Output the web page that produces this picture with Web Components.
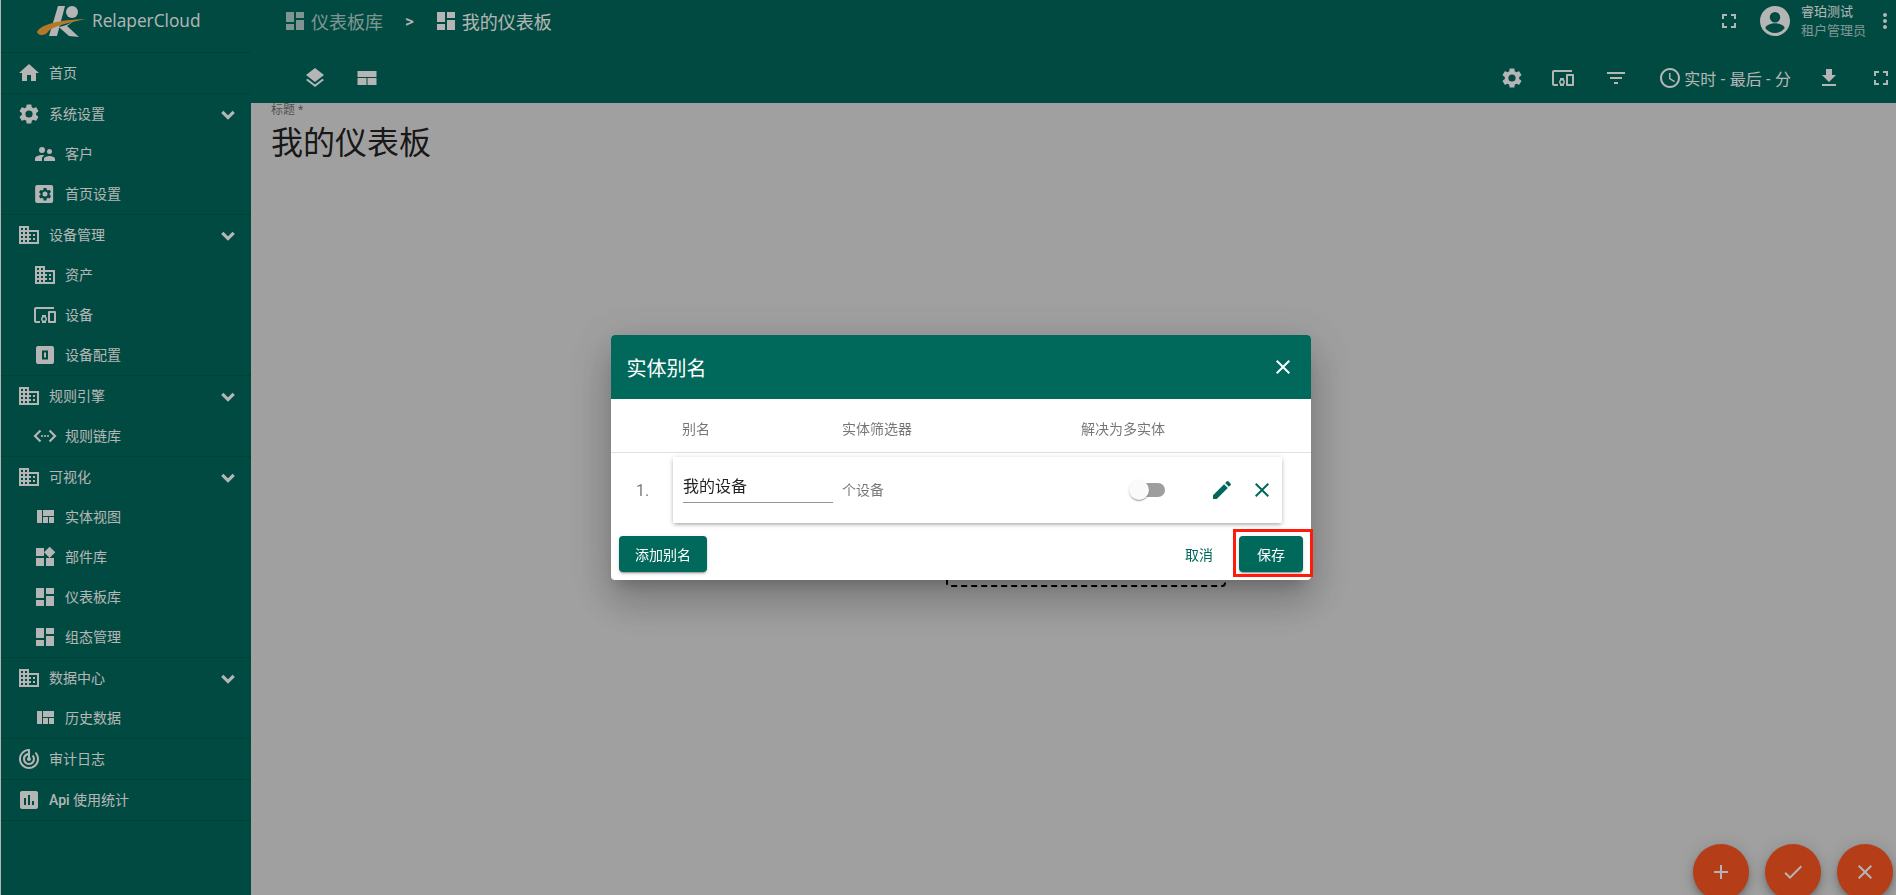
<!DOCTYPE html>
<html lang="zh">
<head>
<meta charset="utf-8">
<title>我的仪表板</title>
<style>
  html, body { margin: 0; height: 100%; overflow: hidden; }
  body { font-family: Roboto, "Noto Sans CJK SC", sans-serif; background: #e2e2e2; }
</style>
</head>
<body>
<app-shell>
  <side-nav slot="side"></side-nav>
  <top-bar slot="top"></top-bar>
  <dash-body slot="main"></dash-body>
  <fab-group slot="main"></fab-group>
</app-shell>
<alias-dialog></alias-dialog>

<script>
const ICONS = {
  home: '<path d="M10 20v-6h4v6h5v-8h3L12 3 2 12h3v8z"/>',
  gear: '<path d="M19.14 12.94c.04-.3.06-.61.06-.94s-.02-.64-.07-.94l2.03-1.58a.49.49 0 0 0 .12-.61l-1.92-3.32a.49.49 0 0 0-.59-.22l-2.39.96a7 7 0 0 0-1.62-.94l-.36-2.54a.48.48 0 0 0-.48-.41h-3.84a.47.47 0 0 0-.47.41l-.36 2.54c-.59.24-1.13.57-1.62.94l-2.39-.96a.48.48 0 0 0-.59.22L2.74 8.87a.47.47 0 0 0 .12.61l2.03 1.58c-.05.3-.09.63-.09.94s.02.64.07.94l-2.03 1.58a.49.49 0 0 0-.12.61l1.92 3.32c.12.22.37.29.59.22l2.39-.96c.5.38 1.03.7 1.62.94l.36 2.54c.05.24.24.41.48.41h3.84c.24 0 .44-.17.47-.41l.36-2.54a7 7 0 0 0 1.62-.94l2.39.96c.22.08.47 0 .59-.22l1.92-3.32a.47.47 0 0 0-.12-.61l-2.01-1.58zM12 15.6A3.6 3.6 0 1 1 12 8.4a3.6 3.6 0 0 1 0 7.2z"/>',
  people: '<path d="M16.5 12a2.5 2.5 0 1 0 0-5 2.5 2.5 0 0 0 0 5zM9 11a3 3 0 1 0 0-6 3 3 0 0 0 0 6zm7.5 3c-1.83 0-5.5.92-5.5 2.75V19h11v-2.25c0-1.83-3.67-2.75-5.5-2.75zM9 13c-2.33 0-7 1.17-7 3.5V19h7v-2.25c0-.85.33-2.34 2.37-3.47C10.5 13.1 9.66 13 9 13z"/>',
  homeset: '<path fill-rule="evenodd" d="M5 3h14a2 2 0 0 1 2 2v14a2 2 0 0 1-2 2H5a2 2 0 0 1-2-2V5a2 2 0 0 1 2-2zm12.4 9.700c.03-.23.05-.46.05-.7s-.02-.47-.05-.7l1.5-1.180-1.400-2.440-1.770.72a5 5 0 0 0-1.200-.7L14.250 6h-2.800l-.27 1.900c-.43.17-.84.4-1.200.7l-1.770-.72-1.400 2.440 1.500 1.180a5 5 0 0 0 0 1.400l-1.500 1.180 1.400 2.440 1.770-.72c.36.3.77.53 1.200.7l.27 1.900h2.800l.27-1.900c.43-.17.84-.4 1.200-.7l1.770.72 1.400-2.440zM12.850 14.500a2.500 2.500 0 1 1 0-5 2.500 2.500 0 0 1 0 5z" transform="translate(-.85 0)"/>',
  domain: '<path d="M12 7V3H2v18h20V7H12zM6 19H4v-2h2v2zm0-4H4v-2h2v2zm0-4H4V9h2v2zm0-4H4V5h2v2zm4 12H8v-2h2v2zm0-4H8v-2h2v2zm0-4H8V9h2v2zm0-4H8V5h2v2zm10 12h-8v-2h2v-2h-2v-2h2v-2h-2V9h8v10zm-2-8h-2v2h2v-2zm0 4h-2v2h2v-2z"/>',
  devices: '<path d="M3 6h18V4H3c-1.100 0-2 .9-2 2v12c0 1.100.9 2 2 2h4v-2H3V6zm10 6H9v1.780c-.61.55-1 1.330-1 2.220s.39 1.670 1 2.220V20h4v-1.780c.61-.55 1-1.340 1-2.220s-.39-1.670-1-2.220V12zm-2 5.500c-.83 0-1.500-.67-1.500-1.500s.67-1.500 1.500-1.500 1.500.67 1.500 1.500-.67 1.500-1.500 1.500zM22 8h-6c-.5 0-1 .5-1 1v10c0 .5.5 1 1 1h6c.5 0 1-.5 1-1V9c0-.5-.5-1-1-1zm-1 10h-4v-8h4v8z"/>',
  profile: '<path fill-rule="evenodd" d="M5 3h14a2 2 0 0 1 2 2v14a2 2 0 0 1-2 2H5a2 2 0 0 1-2-2V5a2 2 0 0 1 2-2zm4 4.500v9h6v-9H9zm2 2h2v5h-2v-5z"/>',
  chain: '<path d="M7.500 6.500 2 12l5.500 5.500M16.500 6.500 22 12l-5.500 5.500" fill="none" stroke="currentColor" stroke-width="2.200"/><circle cx="9" cy="12" r="1.100"/><circle cx="12" cy="12" r="1.100"/><circle cx="15" cy="12" r="1.100"/>',
  view: '<path d="M10 18h5v-6h-5v6zm-6 0h5V5H4v13zm12 0h5v-6h-5v6zM10 5v6h11V5H10z"/>',
  widgets: '<path d="M13 13v8h8v-8h-8zM3 21h8v-8H3v8zM3 3v8h8V3H3zm13.660-1.310L11 7.340 16.660 13l5.660-5.660-5.660-5.650z"/>',
  dashboard: '<path d="M3 13h8V3H3v10zm0 8h8v-6H3v6zm10 0h8V11h-8v10zm0-18v6h8V3h-8z"/>',
  audit: '<path d="M19.070 4.930l-1.410 1.410C19.100 7.790 20 9.790 20 12c0 4.420-3.580 8-8 8s-8-3.580-8-8c0-4.080 3.050-7.440 7-7.930v2.020C8.160 6.570 6 9.030 6 12c0 3.310 2.690 6 6 6s6-2.690 6-6c0-1.660-.67-3.160-1.760-4.240l-1.410 1.410C15.550 9.900 16 10.900 16 12c0 2.210-1.790 4-4 4s-4-1.790-4-4c0-1.860 1.280-3.410 3-3.860v2.140c-.6.35-1 .98-1 1.720 0 1.100.9 2 2 2s2-.9 2-2c0-.74-.4-1.380-1-1.720V2h-1C6.480 2 2 6.480 2 12s4.480 10 10 10 10-4.480 10-10c0-2.760-1.120-5.260-2.930-7.070z"/>',
  chart: '<path d="M19 3H5c-1.100 0-2 .9-2 2v14c0 1.100.9 2 2 2h14c1.100 0 2-.9 2-2V5c0-1.100-.9-2-2-2zM9 17H7v-7h2v7zm4 0h-2V7h2v10zm4 0h-2v-4h2v4z"/>',
  chevron: '<path d="M7.410 9.590 12 14.170l4.590-4.580L18 11l-6 6-6-6z" stroke="currentColor" stroke-width="1.200"/>',
  layers: '<path d="m11.990 18.540-7.370-5.730L3 14.070l9 7 9-7-1.630-1.270zM12 16l7.360-5.730L21 9l-9-7-9 7 1.630 1.270z"/>',
  table: '<path d="M2.500 5h19v6h-19zM2.500 12h9v7h-9zM12.500 12h9v7h-9z"/>',
  full: '<path d="M7 14H5v5h5v-2H7v-3zm-2-4h2V7h3V5H5v5zm12 7h-3v2h5v-5h-2v3zM14 5v2h3v3h2V5h-5z"/>',
  account: '<path d="M12 2C6.480 2 2 6.480 2 12s4.480 10 10 10 10-4.480 10-10S17.520 2 12 2zm0 4a3.500 3.500 0 1 1 0 7 3.500 3.500 0 0 1 0-7zm0 14a8 8 0 0 1-6.400-3.200c.03-2.100 4.270-3.300 6.400-3.300s6.370 1.200 6.400 3.300A8 8 0 0 1 12 20z"/>',
  more: '<path d="M12 8a2 2 0 1 0 0-4 2 2 0 0 0 0 4zm0 2a2 2 0 1 0 0 4 2 2 0 0 0 0-4zm0 6a2 2 0 1 0 0 4 2 2 0 0 0 0-4z"/>',
  filter: '<path d="M10 18h4v-2h-4v2zM3 6v2h18V6H3zm3 7h12v-2H6v2z"/>',
  clock: '<path d="M11.990 2C6.470 2 2 6.480 2 12s4.470 10 9.990 10C17.520 22 22 17.520 22 12S17.520 2 11.990 2zM12 20a8 8 0 1 1 0-16 8 8 0 0 1 0 16z"/><path d="M12.500 7H11v6l5.250 3.150.75-1.230-4.500-2.670z"/>',
  download: '<path d="M19 9h-4V3H9v6H5l7 7 7-7zM5 18v2h14v-2H5z"/>',
  close: '<path d="M19 6.410 17.590 5 12 10.590 6.410 5 5 6.410 10.590 12 5 17.590 6.410 19 12 13.410 17.590 19 19 17.590 13.410 12z"/>',
  edit: '<path d="M3 17.250V21h3.750L17.810 9.940l-3.750-3.750L3 17.250zM20.710 7.040a1 1 0 0 0 0-1.410l-2.340-2.340a1 1 0 0 0-1.410 0l-1.830 1.830 3.750 3.750 1.830-1.830z"/>',
  add: '<path d="M19 13h-6v6h-2v-6H5v-2h6V5h2v6h6v2z"/>',
  check: '<path d="M9 16.170 4.830 12l-1.420 1.410L9 19 21 7l-1.410-1.410z"/>'
};

class IconGlyph extends HTMLElement {
  constructor() {
    super();
    this.attachShadow({ mode: 'open' });
    const size = this.getAttribute('size') || 24;
    this.shadowRoot.innerHTML = `
      <style>
        :host { display: inline-flex; flex: none; width: ${size}px; height: ${size}px; }
        svg { width: 100%; height: 100%; fill: currentColor; display: block; }
      </style>
      <svg viewBox="0 0 24 24">${ICONS[this.getAttribute('name')] || ''}</svg>`;
  }
}
customElements.define('icon-glyph', IconGlyph);

class AppShell extends HTMLElement {
  constructor() {
    super();
    this.attachShadow({ mode: 'open' });
    this.shadowRoot.innerHTML = `
      <style>
        :host { display: grid; grid-template-columns: 251px 1fr; height: 895px; width: 1896px; }
        .right { display: flex; flex-direction: column; min-width: 0; position: relative; }
      </style>
      <slot name="side"></slot>
      <div class="right">
        <slot name="top"></slot>
        <slot name="main"></slot>
      </div>`;
  }
}
customElements.define('app-shell', AppShell);

class NavItem extends HTMLElement {
  constructor() {
    super();
    this.attachShadow({ mode: 'open' });
    const sub = this.hasAttribute('sub');
    this.shadowRoot.innerHTML = `
      <style>
        :host { display: flex; align-items: center; height: 40px; padding-left: ${sub ? 32 : 16}px; padding-right: 11px; color: #fff; font-size: 14px; }
        .ic { width: 24px; height: 24px; display: flex; align-items: center; justify-content: center; margin-right: 8px; color: #fff; }
        .label { flex: 1; white-space: nowrap; position: relative; top: -1px; }
      </style>
      <span class="ic"><icon-glyph name="${this.getAttribute('icon')}"></icon-glyph></span>
      <span class="label"><slot></slot></span>
      ${this.hasAttribute('group') ? '<icon-glyph name="chevron"></icon-glyph>' : ''}`;
  }
}
customElements.define('nav-item', NavItem);

class NavSection extends HTMLElement {
  constructor() {
    super();
    this.attachShadow({ mode: 'open' });
    this.shadowRoot.innerHTML = `
      <style>
        :host { display: block; border-bottom: 1px solid rgba(0,0,0,.12); }
      </style>
      <slot></slot>`;
  }
}
customElements.define('nav-section', NavSection);

class SideNav extends HTMLElement {
  constructor() {
    super();
    this.attachShadow({ mode: 'open' });
    this.shadowRoot.innerHTML = `
      <style>
        :host { display: flex; flex-direction: column; background: #00695c; border-left: 1px solid #fff; box-sizing: border-box; height: 895px; overflow: hidden; }
        .logo { height: 53px; flex: none; box-sizing: border-box; display: flex; align-items: flex-start; padding: 5px 0 0 36px; border-bottom: 1px solid rgba(0,0,0,.12); color: #fff; }
        .logo svg { width: 50px; height: 33px; flex: none; }
        .logo span { font-family: "Open Sans", Roboto, sans-serif; font-size: 17.3px; line-height: 24px; margin: 4px 0 0 5px; }
      </style>
      <div class="logo">
        <svg viewBox="0 0 50 33">
          <path d="M21 1h7l-8 30h-8z" fill="#fff"/>
          <circle cx="35" cy="7" r="6" fill="#fff"/>
          <path d="M22 22c6-1 10-3 15-6l-7 5 12 11-10-1-8-7z" fill="#fff"/>
          <path d="M0 27C4 19 22 15 49 14 30 18 14 22 11 27 8 31 1 31 0 27z" fill="#ffaa3a"/>
        </svg>
        <span>RelaperCloud</span>
      </div>
      <nav-section><nav-item icon="home">首页</nav-item></nav-section>
      <nav-section>
        <nav-item icon="gear" group>系统设置</nav-item>
        <nav-item sub icon="people">客户</nav-item>
        <nav-item sub icon="homeset">首页设置</nav-item>
      </nav-section>
      <nav-section>
        <nav-item icon="domain" group>设备管理</nav-item>
        <nav-item sub icon="domain">资产</nav-item>
        <nav-item sub icon="devices">设备</nav-item>
        <nav-item sub icon="profile">设备配置</nav-item>
      </nav-section>
      <nav-section>
        <nav-item icon="domain" group>规则引擎</nav-item>
        <nav-item sub icon="chain">规则链库</nav-item>
      </nav-section>
      <nav-section>
        <nav-item icon="domain" group>可视化</nav-item>
        <nav-item sub icon="view">实体视图</nav-item>
        <nav-item sub icon="widgets">部件库</nav-item>
        <nav-item sub icon="dashboard">仪表板库</nav-item>
        <nav-item sub icon="dashboard">组态管理</nav-item>
      </nav-section>
      <nav-section>
        <nav-item icon="domain" group>数据中心</nav-item>
        <nav-item sub icon="view">历史数据</nav-item>
      </nav-section>
      <nav-section><nav-item icon="audit">审计日志</nav-item></nav-section>
      <nav-section><nav-item icon="chart"><span style="font-weight:500">Api</span> 使用统计</nav-item></nav-section>`;
  }
}
customElements.define('side-nav', SideNav);

class TopBar extends HTMLElement {
  constructor() {
    super();
    this.attachShadow({ mode: 'open' });
    this.shadowRoot.innerHTML = `
      <style>
        :host { display: block; height: 103px; background: #00695c; color: #fff; flex: none; }
        .row1 { display: flex; align-items: center; height: 42px; padding-left: 32px; }
        .crumb { display: flex; align-items: center; font-size: 18px; gap: 4px; }
        .crumb.dim { opacity: .7; }
        .sep { font-size: 17px; margin: 0 20px 0 22px; font-weight: 500; }
        .spacer { flex: 1; }
        .user { display: flex; flex-direction: column; font-size: 13px; line-height: 19px; margin-left: 8px; }
        .user .role { opacity: .7; }
        .row1 .full { margin-right: 16px; }
        .row2 { display: flex; align-items: center; height: 51px; padding-top: 10px; }
        .left { display: flex; align-items: center; padding-left: 52px; gap: 28px; }
        .tools { margin-left: auto; display: flex; align-items: center; font-size: 16px; }
        .hist { display: flex; align-items: center; gap: 2px; white-space: nowrap; word-spacing: .5px; }
      </style>
      <div class="row1">
        <span class="crumb dim"><icon-glyph name="dashboard"></icon-glyph>仪表板库</span>
        <span class="sep">&gt;</span>
        <span class="crumb"><icon-glyph name="dashboard"></icon-glyph>我的仪表板</span>
        <span class="spacer"></span>
        <icon-glyph class="full" name="full"></icon-glyph>
        <icon-glyph name="account" size="36"></icon-glyph>
        <span class="user"><span>睿珀测试</span><span class="role">租户管理员</span></span>
        <icon-glyph name="more" style="margin-left:7px;margin-right:-1px"></icon-glyph>
      </div>
      <div class="row2">
        <div class="left"><icon-glyph name="layers"></icon-glyph><icon-glyph name="table"></icon-glyph></div>
        <div class="tools">
          <icon-glyph name="gear"></icon-glyph>
          <icon-glyph name="devices" style="margin-left:27px"></icon-glyph>
          <icon-glyph name="filter" style="margin-left:29px"></icon-glyph>
          <span class="hist" style="margin-left:30px"><icon-glyph name="clock"></icon-glyph>实时 - 最后 - 分</span>
          <icon-glyph name="download" style="margin-left:26px"></icon-glyph>
          <icon-glyph name="full" style="margin-left:28px;margin-right:3px"></icon-glyph>
        </div>
      </div>`;
  }
}
customElements.define('top-bar', TopBar);

class DashBody extends HTMLElement {
  constructor() {
    super();
    this.attachShadow({ mode: 'open' });
    this.shadowRoot.innerHTML = `
      <style>
        :host { display: block; flex: 1; padding-left: 20px; position: relative; }
        label { display: block; font-size: 12px; color: rgba(0,0,0,.54); line-height: 12px; margin-top: 1px; }
        .title { font-size: 32px; line-height: 40px; margin-top: 7px; color: rgba(0,0,0,.87); }
        svg.drop { position: absolute; left: 695px; top: 342px; width: 280px; height: 142px; }
      </style>
      <label>标题 *</label>
      <div class="title">我的仪表板</div>
      <svg class="drop" viewBox="0 0 280 142"><rect x="1" y="1" width="278" height="140" rx="3" fill="none" stroke="#000" stroke-width="2" stroke-dasharray="6 4"/></svg>`;
  }
}
customElements.define('dash-body', DashBody);

class FabGroup extends HTMLElement {
  constructor() {
    super();
    this.attachShadow({ mode: 'open' });
    this.shadowRoot.innerHTML = `
      <style>
        :host { position: absolute; right: 3px; top: 844px; display: flex; gap: 16px; }
        button { width: 56px; height: 56px; border-radius: 50%; border: 0; background: #ff5722; color: #fff; display: flex; align-items: center; justify-content: center; padding: 0; box-shadow: 0 3px 5px -1px rgba(0,0,0,.2), 0 6px 10px rgba(0,0,0,.14), 0 1px 18px rgba(0,0,0,.12); }
      </style>
      <button><icon-glyph name="add"></icon-glyph></button>
      <button><icon-glyph name="check"></icon-glyph></button>
      <button><icon-glyph name="close"></icon-glyph></button>`;
  }
}
customElements.define('fab-group', FabGroup);

class AliasRow extends HTMLElement {
  constructor() {
    super();
    this.attachShadow({ mode: 'open' });
    this.shadowRoot.innerHTML = `
      <style>
        :host { display: flex; align-items: center; height: 66px; margin: 4px 29px 0 0; color: rgba(0,0,0,.54); }
        .num { width: 62px; padding-left: 25px; box-sizing: border-box; font-size: 16px; flex: none; }
        .card { flex: 1; height: 66px; background: #fff; display: flex; align-items: center; box-shadow: 0 2px 4px -1px rgba(0,0,0,.3), 0 1px 6px rgba(0,0,0,.14); }
        .name { width: 150px; margin-left: 10px; font-size: 16px; line-height: 24px; color: rgba(0,0,0,.87); border-bottom: 1px solid rgba(0,0,0,.42); padding-bottom: 3px; position: relative; top: -1px; }
        .filter { font-size: 14px; margin-left: 9px; flex: 1; position: relative; top: -1px; }
        .toggle { position: relative; width: 34px; height: 14px; border-radius: 7px; background: #9e9e9e; margin-right: 45px; }
        .toggle i { position: absolute; left: -2px; top: -3px; width: 20px; height: 20px; border-radius: 50%; background: #fafafa; box-shadow: 0 2px 1px -1px rgba(0,0,0,.2), 0 1px 1px rgba(0,0,0,.14), 0 1px 3px rgba(0,0,0,.12); }
        .act { color: #00695c; display: flex; }
      </style>
      <span class="num">1.</span>
      <div class="card">
        <span class="name">我的设备</span>
        <span class="filter">个设备</span>
        <span class="toggle"><i></i></span>
        <span class="act" style="margin-right:16px"><icon-glyph name="edit"></icon-glyph></span>
        <span class="act" style="margin-right:8px"><icon-glyph name="close"></icon-glyph></span>
      </div>`;
  }
}
customElements.define('alias-row', AliasRow);

class AliasDialog extends HTMLElement {
  constructor() {
    super();
    this.attachShadow({ mode: 'open' });
    this.shadowRoot.innerHTML = `
      <style>
        :host { position: fixed; inset: 0; background: rgba(0,0,0,.29); display: block; }
        .box { margin: 335px 0 0 611px; width: 700px; height: 245px; background: #fff; border-radius: 4px; position: relative; display: flex; flex-direction: column; box-shadow: 0 11px 15px -7px rgba(0,0,0,.2), 0 24px 38px 3px rgba(0,0,0,.14), 0 9px 46px 8px rgba(0,0,0,.12); }
        header { height: 64px; background: #00695c; color: #fff; border-radius: 4px 4px 0 0; display: flex; align-items: center; justify-content: space-between; padding: 0 16px 0 15.5px; font-size: 20px; flex: none; }
        .heads { display: grid; grid-template-columns: 160px 239px 1fr; height: 54px; padding: 5px 0 0 71px; align-items: center; font-size: 14px; color: rgba(0,0,0,.54); border-bottom: 1px solid #e0e0e0; box-sizing: border-box; flex: none; }
        footer { margin-top: auto; padding: 0 8px 8px; display: flex; align-items: center; font-size: 14px; }
        button { font: inherit; border: 0; border-radius: 4px; height: 36px; padding: 0; display: block; }
        .solid { background: #00695c; color: #fff; box-shadow: 0 3px 1px -2px rgba(0,0,0,.2), 0 2px 2px rgba(0,0,0,.14), 0 1px 5px rgba(0,0,0,.12); }
        .text { background: none; color: #00695c; }
        .redbox { position: absolute; right: -2px; bottom: 3px; width: 80px; height: 48px; border: 3px solid #ff1a0a; box-sizing: border-box; }
      </style>
      <div class="box">
        <header><span>实体别名</span><icon-glyph name="close"></icon-glyph></header>
        <div class="heads"><span>别名</span><span>实体筛选器</span><span>解决为多实体</span></div>
        <alias-row></alias-row>
        <footer>
          <button class="solid" style="width:88px">添加别名</button>
          <button class="text" style="width:64px;margin-left:auto;margin-right:8px">取消</button>
          <button class="solid" style="width:64px">保存</button>
        </footer>
        <div class="redbox"></div>
      </div>`;
  }
}
customElements.define('alias-dialog', AliasDialog);
</script>
</body>
</html>
